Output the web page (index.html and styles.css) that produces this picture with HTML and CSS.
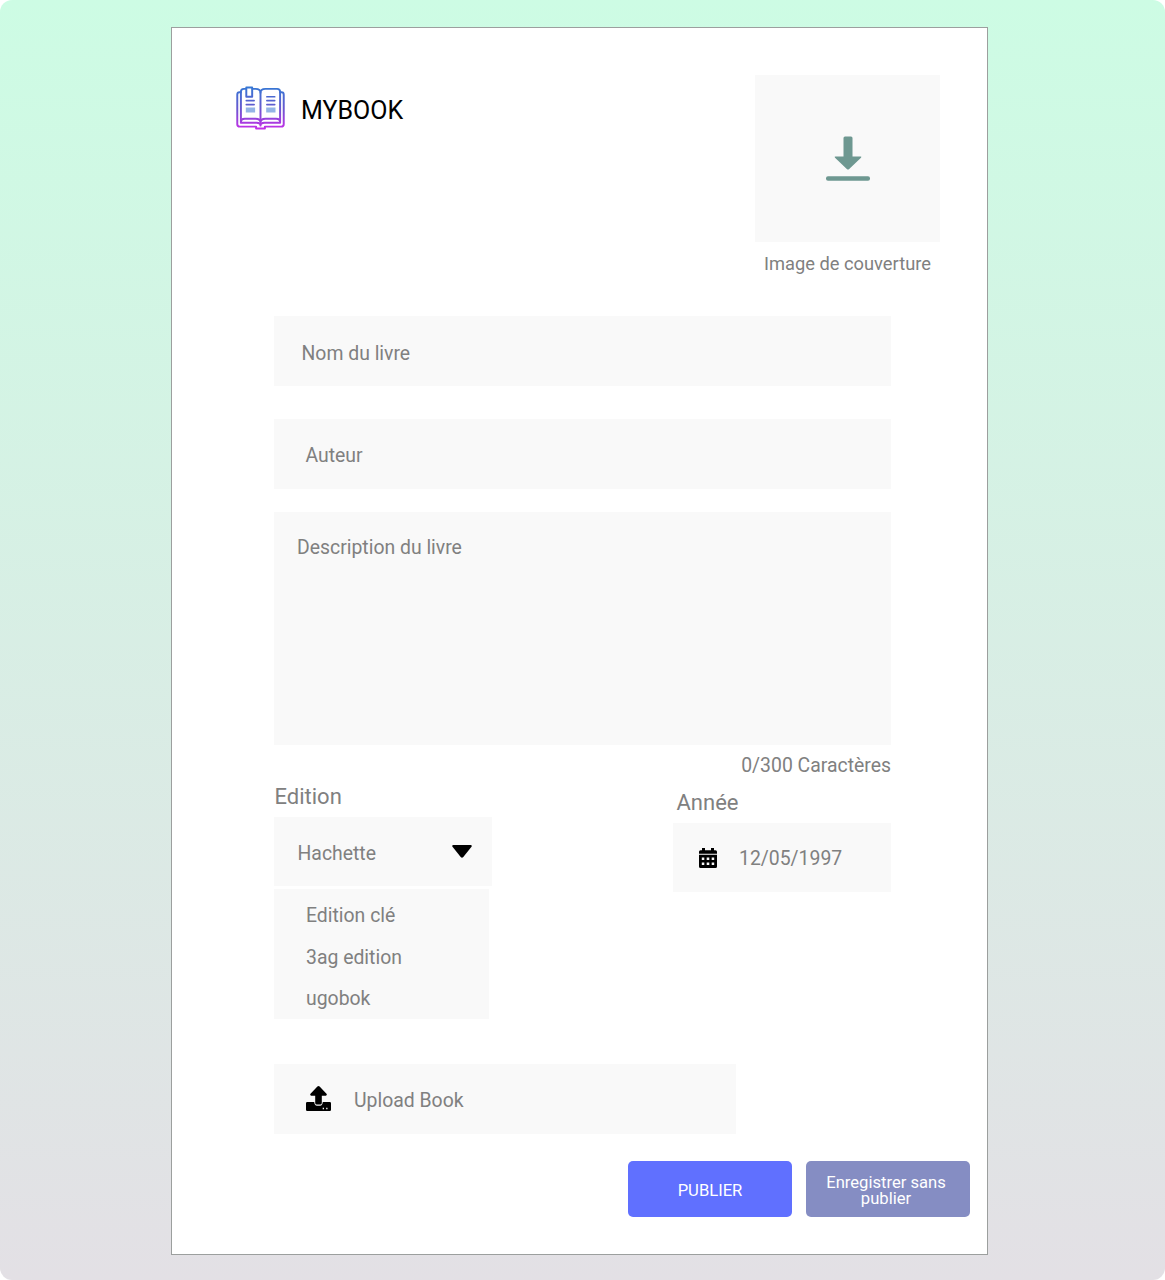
FILE: index.html
```html
<!DOCTYPE html>
<html lang="fr">
<head>
<meta charset="utf-8">
<title>MyBook</title>
<link rel="stylesheet" href="styles.css">
</head>
<body>
<main class="page">
  <form class="card">
    <header class="header">
      <div class="brand">
        <svg class="brand-icon" viewBox="0 0 50 44" fill="none">
          <defs>
            <linearGradient id="ink" gradientUnits="userSpaceOnUse" x1="0" y1="0" x2="0" y2="44">
              <stop offset="0" stop-color="#3478d4"/>
              <stop offset=".5" stop-color="#6658cf"/>
              <stop offset="1" stop-color="#c62de8"/>
            </linearGradient>
          </defs>
          <g stroke="url(#ink)" stroke-width="2" stroke-linejoin="round" stroke-linecap="round">
            <path d="M5 6H3.500Q1.300 6 1.300 8.500V38.500Q1.300 41 4 41H20.500V43H29.500V41H46Q48.700 41 48.700 38.500V8.500Q48.700 6 46.500 6H45"/>
            <path d="M10 2.500H8Q5 2.500 5 5.500V37H21Q25 37 25 40Q25 37 29 37H45V5.500Q45 2.500 42 2.500H30Q25 2.500 25 6.500Q25 2.500 20 2.500H17"/>
            <path d="M5 36.500Q5 33 9 33H20Q25 33 25 37Q25 33 30 33H41Q45 33 45 36.500M25 6.500V37"/>
            <path d="M10.500 1H16.500V10.500H10.500Z"/>
            <path stroke-width="1.700" d="M10.500 14.500H18.500M10.500 18.500H18.500M31.500 10.500H39.500M31.500 14.500H39.500M31.500 18.500H39.500"/>
          </g>
          <path d="M10 21.500H19.500V26.500H10ZM30.800 21.500H40.300V26.500H30.800Z" fill="#94b4e6"/>
        </svg>
        <span class="brand-name">MYBOOK</span>
      </div>
      <div class="cover">
        <div class="cover-drop">
          <svg class="cover-icon" viewBox="0 0 44 45" fill="#6e9891">
            <path d="M19 .5H25Q26.500 .5 26.500 2V20.500H34.500Q36 20.500 35 21.700L23.200 33Q22 34 20.800 33L9 21.700Q8 20.500 9.500 20.500H17.500V2Q17.500 .5 19 .5Z"/>
            <rect y="40.300" width="44" height="4.500" rx="2"/>
          </svg>
        </div>
        <span class="cover-caption">Image de couverture</span>
      </div>
    </header>

    <div class="fields">
      <div class="field field-name">Nom du livre</div>
      <div class="field field-author">Auteur</div>
      <div class="field field-description">Description du livre</div>
      <div class="counter">0/300 Caractères</div>

      <div class="details">
        <div class="edition">
          <div class="label">Edition</div>
          <div class="field select">
            <span>Hachette</span>
            <svg class="caret" viewBox="0 0 20 13"><path d="M1.300 0H18.700Q20.300 .3 19.500 1.700L11.300 12Q10 13.300 8.700 12L.5 1.700Q-.3 .3 1.300 0Z"/></svg>
          </div>
          <ul class="options">
            <li>Edition clé</li>
            <li>3ag edition</li>
            <li>ugobok</li>
          </ul>
        </div>
        <div class="year">
          <div class="label year-label">Année</div>
          <div class="field date">
            <svg class="calendar" viewBox="0 0 18 20">
              <path fill-rule="evenodd" d="M3 0H6V2.200H12V0H15V2.200H16.500Q18 2.200 18 3.700V5.800H0V3.700Q0 2.200 1.500 2.200H3ZM0 6.800H18V18.500Q18 20 16.500 20H1.500Q0 20 0 18.500ZM2.800 9.500V12H5.300V9.500ZM7.700 9.500V12H10.300V9.500ZM12.700 9.500V12H15.200V9.500ZM2.800 14.500V17H5.300V14.500ZM7.700 14.500V17H10.300V14.500ZM12.700 14.500V17H15.200V14.500Z"/>
            </svg>
            <span>12/05/1997</span>
          </div>
        </div>
      </div>

      <div class="field upload">
        <svg class="upload-icon" viewBox="0 0 25 25">
          <path d="M11.400 .4Q12.500-.4 13.600 .4L20.500 7.800Q21.400 9.500 19.800 9.800H15.800V17Q15.800 18.500 14.200 18.500H10.800Q9.200 18.500 9.200 17V9.800H5.200Q3.600 9.500 4.500 7.800Z"/>
          <path fill-rule="evenodd" d="M1.200 16H8.200Q8.500 19.700 11 19.700H14Q16.500 19.700 16.800 16H23.800Q25 16 25 17.200V23.800Q25 25 23.800 25H1.200Q0 25 0 23.800V17.200Q0 16 1.200 16ZM16.700 21.800V23.200H18V21.800ZM20.200 21.800V23.200H21.500V21.800Z"/>
        </svg>
        <span>Upload Book</span>
      </div>
    </div>

    <div class="actions">
      <button type="button" class="button publish">PUBLIER</button>
      <button type="button" class="button save">Enregistrer sans publier</button>
    </div>
  </form>
</main>
</body>
</html>
```
FILE: styles.css
```css
* {
  box-sizing: border-box;
}

body {
  margin: 0;
  background: #fff;
  font-family: Roboto, "Liberation Sans", sans-serif;
  color: #808080;
}

.page {
  height: 1280px;
  padding: 27px 177px 25px 171px;
  border-radius: 12px;
  background: linear-gradient(#cdfce4, #e3e0e5);
}

.card {
  height: 1228px;
  padding: 47px 17px 0 64px;
  border: 1px solid #9c9f9e;
  background: #fff;
}

.header {
  display: flex;
  justify-content: space-between;
  align-items: flex-start;
  height: 241px;
  padding-right: 30px;
}

.brand {
  display: flex;
  align-items: center;
  gap: 16px;
  margin-top: 11px;
}

.brand-icon {
  width: 49px;
  height: 44px;
}

.brand-name {
  padding-top: 5px;
  color: #000;
  font-size: 25px;
  line-height: 30px;
}

.cover {
  display: flex;
  flex-direction: column;
  align-items: center;
  width: 185px;
}

.cover-drop {
  display: flex;
  justify-content: center;
  align-items: center;
  width: 100%;
  height: 167px;
  background: #f9f9f9;
}

.cover-icon {
  width: 44px;
  height: 45px;
}

.cover-caption {
  margin-top: 10px;
  font-size: 18.3px;
  line-height: 24px;
  white-space: nowrap;
}

.fields {
  width: 617px;
  margin-left: 38px;
}

.field {
  display: flex;
  align-items: center;
  height: 70px;
  background: #f9f9f9;
  font-size: 19.4px;
  line-height: 24px;
}

.field-name {
  padding: 5px 0 0 27.5px;
}

.field-author {
  margin-top: 33px;
  padding: 4px 0 0 31.5px;
}

.field-description {
  align-items: flex-start;
  height: 233px;
  margin-top: 23px;
  padding: 24px 23px;
}

.counter {
  margin-top: 9px;
  font-size: 19.4px;
  line-height: 24px;
  text-align: right;
}

.details {
  display: flex;
  justify-content: space-between;
  align-items: flex-start;
  height: 286px;
}

.edition {
  width: 218px;
  padding-top: 5px;
}

.label {
  padding-left: 0.5px;
  font-size: 22px;
  line-height: 28px;
}

.select {
  justify-content: space-between;
  height: 69px;
  margin-top: 6px;
  padding: 4px 20px 0 23.5px;
}

.caret {
  width: 20px;
  height: 13px;
  margin-top: -5px;
}

.options {
  width: 215px;
  height: 130px;
  margin: 3px 0 0;
  padding: 6px 0 0 32px;
  background: #f9f9f9;
  font-size: 19.4px;
  line-height: 41.5px;
  list-style: none;
}

.year {
  width: 218px;
  padding-top: 11px;
}

.year-label {
  padding-left: 3.5px;
}

.date {
  gap: 22px;
  height: 69px;
  margin-top: 6px;
  padding: 0 0 0 26px;
}

.date span {
  padding-top: 2px;
}

.calendar {
  width: 18px;
  height: 20px;
}

.upload {
  gap: 23px;
  width: 462px;
  padding: 0 0 0 32px;
}

.upload span {
  padding-top: 4px;
}

.upload-icon {
  width: 25px;
  height: 25px;
  margin-top: -1px;
}

.actions {
  display: flex;
  justify-content: flex-end;
  gap: 14px;
  margin-top: 27px;
}

.button {
  width: 164px;
  height: 56px;
  padding: 3px 16px 0;
  border: 0;
  border-radius: 5px;
  color: #fff;
  font-family: inherit;
  font-size: 16.6px;
  line-height: 16px;
}

.publish {
  background: #6070ff;
}

.save {
  padding: 3px 18px 0 14px;
  background: #858dc3;
}
```
